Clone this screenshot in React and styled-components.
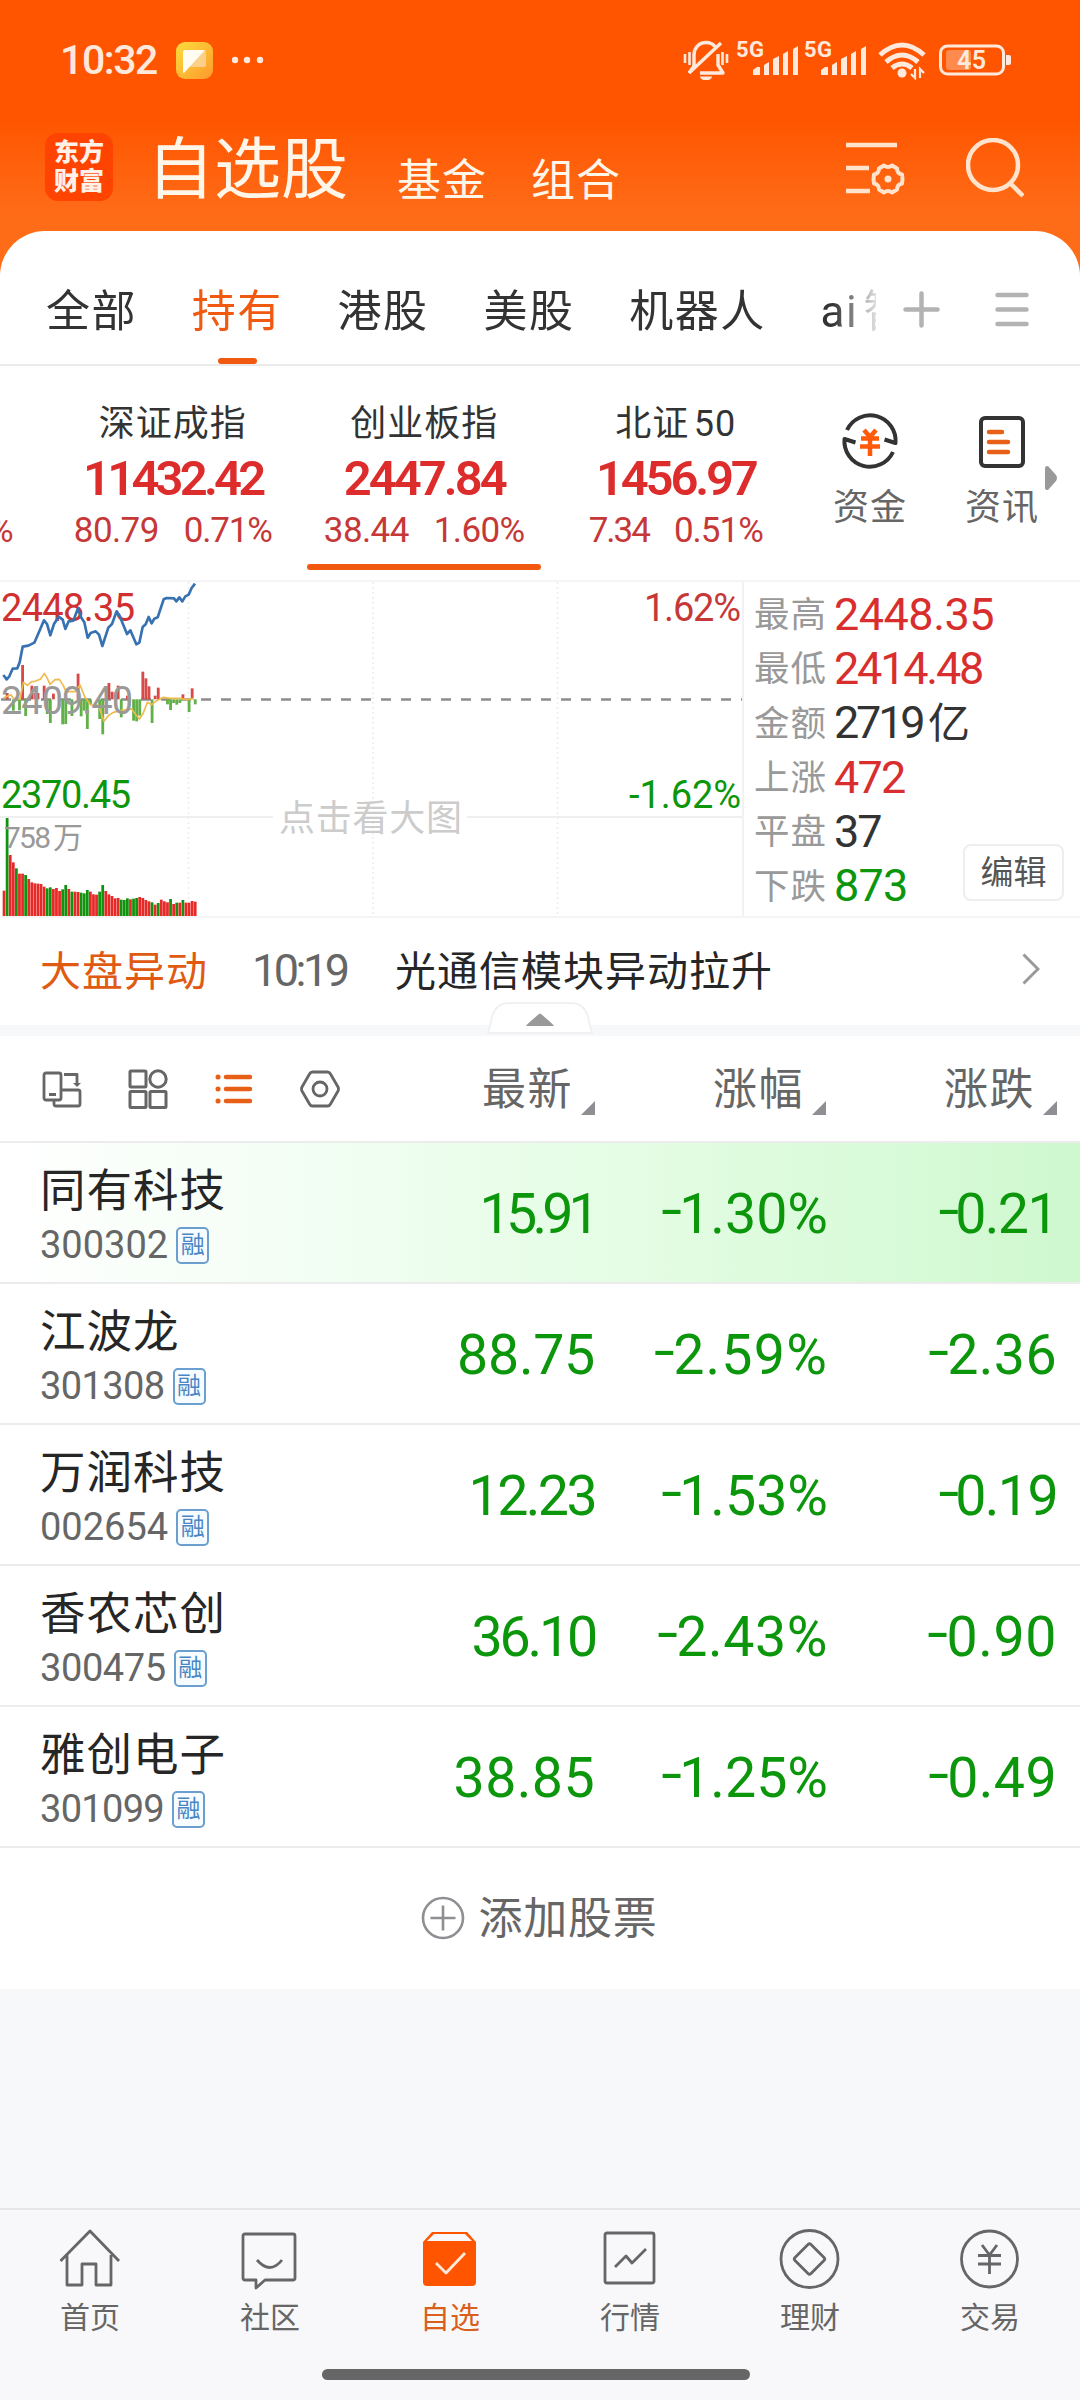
import styled, { createGlobalStyle } from "styled-components";

const GlobalStyle = createGlobalStyle`
	* {
		box-sizing: border-box;
	}
	body {
		margin: 0;
		background: #f7f8fa;
		font-family: Roboto, "Noto Sans CJK SC", sans-serif;
		text-autospace: normal;
		color: #333;
	}
	svg {
		display: block;
		flex: none;
	}
`;

const RED = "#dd2c2c";
const GREEN = "#0c960c";
const ORANGE = "#f0590f";

const Page = styled.div`
	width: 1080px;
	height: 2400px;
	display: flex;
	flex-direction: column;
	overflow: hidden;
	background: linear-gradient(#ff5500 0, #ff5500 118px, #ff6c18 215px, #ff6c18 300px, #f7f8fa 300px);
`;

// text with its own tracking, used for every figure on the page
const Num = styled.span`
	font-size: ${(p) => p.$size}px;
	letter-spacing: ${(p) => p.$track || 0}px;
	color: ${(p) => p.$color || "inherit"};
	font-weight: ${(p) => p.$weight || 400};
	line-height: 1;
	white-space: nowrap;
`;

/* ---------- status bar ---------- */

const StatusBar = styled.div`
	height: 120px;
	padding: 0 69px 0 60px;
	display: flex;
	align-items: center;
	color: #ffe9dc;
`;

const StatusLeft = styled.div`
	display: flex;
	align-items: center;
	gap: 19px;
	flex: 1;
`;

const StatusIcons = styled.div`
	display: flex;
	align-items: center;
`;

const SignalIcon = styled.svg`
	margin-right: ${(p) => p.$gap}px;
`;

const Signal = ({ gap }) => (
	<SignalIcon $gap={gap} width="64" height="56" viewBox="0 -8 64 56">
		<text x="0" y="17" fontSize="22" fontWeight="700" fill="#ffe9dc" textLength="28">
			5G
		</text>
		<g fill="#ffe9dc">
			<path d="M17 35v-5l4-3h3v8z" />
			<path d="M28 35V25l5-3v13z" />
			<path d="M37 35V19l6-3v19z" />
			<path d="M47 35V14l5-3v24z" />
			<path d="M57 35V9l5-3v29z" />
		</g>
	</SignalIcon>
);

const MuteIcon = styled.svg`
	margin-right: 7px;
`;

const WifiIcon = styled.svg`
	margin-right: 13px;
`;

const StatusRow = () => (
	<StatusBar>
		<StatusLeft>
			<Num $size={41} $track={-1.4} $weight={500}>
				10:32
			</Num>
			<svg width="37" height="37" viewBox="0 0 37 37">
				<defs>
					<linearGradient id="note" x1="0" y1="0" x2="1" y2="1">
						<stop offset="0" stopColor="#fddc3c" />
						<stop offset="1" stopColor="#fd9a2c" />
					</linearGradient>
				</defs>
				<rect width="37" height="37" rx="9" fill="url(#note)" />
				<path d="M9 8h19a2 2 0 0 1 2 2v13a2 2 0 0 1-2 2H14z" fill="#fdd08a" />
				<path d="M9 8h20L8 31a1 1 0 0 1-1-1V10a2 2 0 0 1 2-2z" fill="#fffdf2" />
			</svg>
			<svg width="34" height="8" viewBox="0 0 34 8" fill="#ffe9dc">
				<circle cx="3" cy="4" r="3.200" />
				<circle cx="15" cy="4" r="3.200" />
				<circle cx="28" cy="4" r="3.200" />
			</svg>
		</StatusLeft>
		<StatusIcons>
			<MuteIcon width="46" height="40" viewBox="0 0 46 40" fill="none" stroke="#ffe9dc" strokeWidth="3.400">
				<path d="M11 26V15c0-7 5-12.500 12-12.500 4 0 7 1.600 9 4M35 14v11l5 8H17M6 33L38 3" strokeLinejoin="round" />
				<path d="M6 33l5-7" />
				<path d="M17 36.500h12a6 4 0 0 1-12 0z" fill="#ffe9dc" stroke="none" />
				<path d="M2 14v9M6.500 12v13M39.500 12v13M44 14v9" strokeWidth="2.600" />
			</MuteIcon>
			<Signal gap={4} />
			<Signal gap={10} />
			<WifiIcon width="48" height="40" viewBox="0 0 48 40" fill="none" stroke="#ffe9dc" strokeWidth="5">
				<path d="M2 15Q24-5 46 15" />
				<path d="M8 22Q24 8 40 22" />
				<path d="M14 28Q24 20 34 28" />
				<circle cx="24" cy="33" r="4.500" fill="#ffe9dc" stroke="none" />
				<path d="M37 29v9l-4-4M42 38v-9l4 4" strokeWidth="2.200" />
			</WifiIcon>
			<svg width="72" height="32" viewBox="0 0 72 32">
				<rect x="1.500" y="2" width="63" height="28" rx="7" fill="none" stroke="#ffe9dc" strokeWidth="3" />
				<rect x="7" y="6" width="25" height="20" rx="3" fill="#ff8a4d" />
				<path d="M67 11h3a2 2 0 0 1 2 2v6a2 2 0 0 1-2 2h-3z" fill="#ffe9dc" />
				<text x="18" y="25" fontSize="25" fontWeight="600" fill="#ffe9dc" textLength="29">
					45
				</text>
			</svg>
		</StatusIcons>
	</StatusBar>
);

/* ---------- title bar ---------- */

const TitleBar = styled.header`
	height: 111px;
	padding: 0 56px 0 45px;
	display: flex;
	align-items: flex-start;
	color: #fff6ea;
`;

const Logo = styled.div`
	width: 68px;
	height: 68px;
	margin: 13px 34px 0 0;
	padding-top: 5px;
	border-radius: 13px;
	background: #ff4300;
	color: #fff0e8;
	font-size: 25px;
	font-weight: 900;
	line-height: 29px;
	text-align: center;
`;

const Title = styled.h1`
	margin: 10px 49px 0 0;
	font-size: 67px;
	line-height: 80px;
	font-weight: 400;
`;

const SubTitle = styled.span`
	margin: 33px 44px 0 0;
	font-size: 44px;
	letter-spacing: 1px;
	line-height: 56px;
`;

const TitleIcons = styled.div`
	margin: 18px 0 0 auto;
	display: flex;
	gap: 58px;
`;

const Titles = () => (
	<TitleBar>
		<Logo>
			东方
			<br />
			财富
		</Logo>
		<Title>自选股</Title>
		<SubTitle>基金</SubTitle>
		<SubTitle>组合</SubTitle>
		<TitleIcons>
			<svg width="62" height="62" viewBox="0 0 62 62" fill="none" stroke="#ffe3cc" strokeWidth="4.500">
				<path d="M0 7h51M0 30h23M0 53h24" />
				<path
					d="M38 27.500q4 3 8 0l5 3q0 5 5 6 1 4.500 0 9-5 1-5 6l-5 3q-4-3-8 0l-5-3q0-5-5-6-1-4.500 0-9 5-1 5-6z"
					strokeWidth="4"
					strokeLinejoin="round"
				/>
				<circle cx="42" cy="41" r="3.500" fill="#ffe3cc" stroke="none" />
			</svg>
			<svg width="58" height="62" viewBox="0 0 58 62" fill="none" stroke="#ffe3cc" strokeWidth="4.500">
				<circle cx="27" cy="27" r="25" />
				<path d="M44 45l13 13" />
			</svg>
		</TitleIcons>
	</TitleBar>
);

/* ---------- group tabs ---------- */

const Sheet = styled.div`
	height: 1758px;
	background: #fff;
	border-radius: 45px 45px 0 0;
	overflow: hidden;
`;

const GroupBar = styled.nav`
	height: 135px;
	padding-left: 46px;
	border-bottom: 2px solid #ebebeb;
	display: flex;
	align-items: stretch;
`;

const GroupList = styled.div`
	width: 830px;
	display: flex;
	gap: 54.8px;
	overflow: hidden;
	-webkit-mask-image: linear-gradient(90deg, #000 787px, transparent 838px);
	mask-image: linear-gradient(90deg, #000 787px, transparent 838px);
`;

const Group = styled.div`
	flex: none;
	display: flex;
	flex-direction: column;
	align-items: center;
	font-size: 44px;
	letter-spacing: 1.5px;
	line-height: 60px;
	padding-top: 51px;
	color: ${(p) => (p.$active ? ORANGE : "#333")};

	&::after {
		content: "";
		width: 39px;
		height: 6px;
		margin-top: 16px;
		border-radius: 3px;
		background: ${(p) => (p.$active ? ORANGE : "transparent")};
	}
`;

const GroupTools = styled.div`
	display: flex;
	align-items: center;
	gap: 55px;
	padding: 23px 0 0 27px;
`;

const groups = ["全部", "持有", "港股", "美股", "机器人", "ai智能"];

const Groups = () => (
	<GroupBar>
		<GroupList>
			{groups.map((g) => (
				<Group key={g} $active={g === "持有"}>
					{g}
				</Group>
			))}
		</GroupList>
		<GroupTools>
			<svg width="37" height="37" viewBox="0 0 37 37" stroke="#b3b3b3" strokeWidth="4.500" strokeLinecap="round">
				<path d="M18.500 2.500v32M2.500 18.500h32" />
			</svg>
			<svg width="34" height="37" viewBox="0 0 34 37" stroke="#b3b3b3" strokeWidth="4.500" strokeLinecap="round">
				<path d="M2.500 4h29M2.500 18.500h29M2.500 33h29" />
			</svg>
		</GroupTools>
	</GroupBar>
);

/* ---------- index strip ---------- */

const IndexStrip = styled.section`
	height: 214px;
	display: flex;
`;

const IndexCell = styled.div`
	width: ${(p) => (p.$cut ? 47 : 251.5)}px;
	flex: none;
	padding-top: 32px;
	display: flex;
	flex-direction: column;
	align-items: center;
	color: #333;

	&::after {
		content: "";
		width: 234px;
		height: 6px;
		margin-top: 12px;
		border-radius: 3px;
		background: ${(p) => (p.$active ? ORANGE : "transparent")};
	}
`;

const IndexName = styled.div`
	font-size: 36px;
	letter-spacing: 1px;
	line-height: 52px;
	height: 51px;
`;

const IndexPrice = styled.div`
	height: 58px;
	display: flex;
	align-items: center;
`;

const IndexChange = styled.div`
	height: 44px;
	display: flex;
	align-items: center;
	gap: 25px;
	margin-top: 1px;
	align-self: ${(p) => (p.$cut ? "flex-start" : "center")};
	margin-left: ${(p) => (p.$cut ? -12 : 0)}px;
`;

const Shortcuts = styled.div`
	flex: 1;
	display: flex;
	padding: 44px 0 0 32px;
	gap: 59px;
`;

const Shortcut = styled.div`
	display: flex;
	flex-direction: column;
	align-items: center;
	gap: 11px;
	width: 73px;
	font-size: 36px;
	letter-spacing: 1px;
	line-height: 50px;
	color: #666;
	white-space: nowrap;
`;

const MoreArrow = styled.div`
	margin: 56px 0 0 -53px;
`;

const indexes = [
	{ name: "深证成指", price: "11432.42", pt: -3.8, diff: "80.79", dt: -0.6, rate: "0.71%", rt: -1.2 },
	{ name: "创业板指", price: "2447.84", pt: -3, diff: "38.44", dt: -0.6, rate: "1.60%", rt: -0.6, active: true },
	{ name: "北证50", price: "1456.97", pt: -3.2, diff: "7.34", dt: -2, rate: "0.51%", rt: -1 },
];

const Indexes = () => (
	<IndexStrip>
		<IndexCell $cut>
			<IndexName />
			<IndexPrice />
			<IndexChange $cut>
				<Num $size={35} $color="#c63838">
					%
				</Num>
			</IndexChange>
		</IndexCell>
		{indexes.map((x) => (
			<IndexCell key={x.name} $active={x.active}>
				<IndexName>{x.name}</IndexName>
				<IndexPrice>
					<Num $size={49} $weight={600} $track={x.pt} $color={RED}>
						{x.price}
					</Num>
				</IndexPrice>
				<IndexChange>
					<Num $size={35} $track={x.dt} $color="#c63838">
						{x.diff}
					</Num>
					<Num $size={35} $track={x.rt} $color="#c63838">
						{x.rate}
					</Num>
				</IndexChange>
			</IndexCell>
		))}
		<Shortcuts>
			<Shortcut>
				<svg width="60" height="62" viewBox="0 0 60 62" fill="none" stroke="#333" strokeWidth="4" strokeLinejoin="round">
					<path d="M7 20A25.500 25.500 0 0 1 55.500 33l-11-3.500M53 42A25.500 25.500 0 0 1 4.500 29l11 3.500" />
					<path d="M24 20l6 7 6-7M21 28.500h18M20 36.500h20M30 27v19" stroke="#ff5a0a" strokeWidth="4.500" />
				</svg>
				资金
			</Shortcut>
			<Shortcut>
				<svg width="46" height="62" viewBox="0 0 46 62" fill="none" stroke="#333" strokeWidth="4">
					<rect x="2" y="8" width="42" height="48" rx="4" />
					<path d="M10 22h13M10 32h19M10 42h19" stroke="#e85f18" strokeWidth="4.500" strokeLinecap="round" />
				</svg>
				资讯
			</Shortcut>
			<MoreArrow>
				<svg width="13" height="24" viewBox="0 0 13 24">
					<path d="M0 2q0-2 3-2l8 9q2 3 0 6l-8 9q-3 0-3-2z" fill="#999" />
				</svg>
			</MoreArrow>
		</Shortcuts>
	</IndexStrip>
);

/* ---------- minute chart ---------- */

const ChartRow = styled.section`
	height: 338px;
	display: flex;
	border-top: 2px solid #f4f4f4;
	border-bottom: 2px solid #f4f4f4;
`;

// all series below are in thirds of a pixel
const STEP = 9.25;
const price =
	"10,318 20,331 28,322 38,299 52,298 59,280 68,233 85,230 103,221 118,187 132,154 141,165 151,199 162,165 176,143 188,152 196,180 206,157 220,155 234,118 243,145 253,160 263,206 272,192 287,187 297,197 307,231 325,176 336,165 350,127 359,141 381,195 391,184 409,226 418,221 428,174 437,166 446,144 455,163 463,149 473,145 491,91 500,87 522,88 529,97 538,85 547,97 556,82 566,77 575,57 585,44";
const average =
	"10,387 25,380 33,378 40,388 60,390 70,340 82,349 95,338 105,337 122,330 133,313 142,328 150,346 165,332 178,331 190,350 198,368 225,368 240,348 255,385 272,408 295,408 312,457 325,440 340,430 360,425 395,420 410,440 418,450 430,432 442,400 455,407 470,395 490,385 510,388 540,388 560,392 582,388";

// [slot, y of the free end], the zero line is at 391
const flow = [
	[1, 372], [3, 425], [4, 396], [5, 424], [6, 288], [7, 441], [9, 350], [10, 372], [11, 372], [13, 350],
	[14, 435], [15, 462], [16, 374], [19, 466], [20, 465], [22, 441], [24, 314], [25, 442], [26, 425],
	[27, 480], [28, 405], [31, 450], [32, 496], [34, 342], [35, 368], [36, 371], [37, 350], [38, 445],
	[40, 380], [42, 455], [43, 457], [44, 440], [45, 308], [46, 328], [47, 352], [48, 462], [49, 380],
	[50, 356], [53, 406], [54, 423], [55, 402], [56, 407], [57, 402], [58, 376], [60, 429], [61, 358], [62, 406],
];

const volume = [
	965, 747, 858, 880, 898, 914, 914, 918, 930, 940, 943, 944, 945, 953, 958, 955, 960, 957, 966, 961, 948, 960,
	968, 968, 969, 971, 973, 963, 968, 976, 977, 968, 948, 966, 976, 981, 988, 987, 992, 993, 988, 991, 989, 987,
	984, 987, 993, 997, 1000, 1007, 1002, 992, 997, 1000, 990, 1005, 1001, 1001, 993, 1001, 1001, 996, 998,
];
const fallSlots = [1, 4, 7, 14, 15, 19, 20, 22, 25, 26, 27, 31, 32, 38, 39, 40, 42, 43, 48, 50, 54, 56, 58];

const MinuteChart = () => (
	<svg width="742" height="334" viewBox="0 2 742 334">
		<g stroke="#ececec" strokeWidth="1.500" strokeDasharray="2 3">
			<path d="M188.500 2v334M373 2v334M557.500 2v334" />
		</g>
		<path d="M0 237h273M467 237h275" stroke="#efefef" strokeWidth="2" />
		<path d="M1 119.500h741" stroke="#8c8c8c" strokeWidth="2.500" strokeDasharray="10 10" />
		<g fontSize="38">
			<text x="1" y="41" fill="#d0302f" textLength="134">2448.35</text>
			<text x="741" y="41" fill="#c63838" textAnchor="end" textLength="97">1.62%</text>
			<text x="1" y="228" fill={GREEN} textLength="130">2370.45</text>
			<text x="741" y="228" fill={GREEN} textAnchor="end" textLength="112">-1.62%</text>
		</g>
		<text x="279" y="251" fontSize="36" fill="#ccc" textLength="183">点击看大图</text>
		<g transform="translate(0 -11) scale(0.33333)">
			{flow.map(([slot, y]) => (
				<rect
					key={slot}
					x={8 + slot * STEP}
					y={Math.min(y, 391)}
					width="8.500"
					height={Math.abs(y - 391)}
					fill={y < 391 ? "#d84a4a" : "#62b04a"}
				/>
			))}
			<polyline points={average} fill="none" stroke="#efba4c" strokeWidth="5" strokeLinejoin="round" />
			<polyline points={price} fill="none" stroke="#3672b2" strokeWidth="8" strokeLinejoin="round" />
			{volume.map((y, i) => (
				<rect
					key={i}
					x={8 + i * STEP}
					y={y}
					width="8.300"
					height={1041 - y}
					fill={fallSlots.includes(i) ? "#12930f" : "#e62a28"}
				/>
			))}
		</g>
		<text x="1" y="134" fontSize="38" fill="#999" textLength="132">2409.40</text>
		<text x="4" y="268" fontSize="30" fill="#999" textLength="79">758万</text>
	</svg>
);

const Stats = styled.div`
	flex: 1;
	min-width: 0;
	display: flex;
	border-left: 2px solid #f2f2f2;
	padding: 5px 16px 0 10px;
`;

const StatList = styled.div`
	flex: 1;
	min-width: 0;
`;

const Stat = styled.div`
	height: 54.3px;
	display: flex;
	align-items: center;
	white-space: nowrap;
`;

const StatLabel = styled.span`
	width: 80px;
	flex: none;
	padding-bottom: 5px;
	font-size: 35.5px;
	letter-spacing: 1px;
	color: #999;
`;

const Unit = styled.span`
	font-size: 42px;
`;

const EditButton = styled.button`
	flex: none;
	align-self: flex-end;
	width: 101px;
	height: 57px;
	margin: 0 0 15px -50px;
	padding: 0;
	border: 2px solid #eee;
	border-radius: 8px;
	background: #fff;
	color: #555;
	font: inherit;
	font-size: 33px;
	line-height: 50px;
`;

const stats = [
	{ label: "最高", value: "2448.35", color: "#d82e2e", track: -0.5 },
	{ label: "最低", value: "2414.48", color: "#d82e2e", track: -2.2 },
	{ label: "金额", value: "2719", unit: "亿", color: "#333", track: -3.2 },
	{ label: "上涨", value: "472", color: "#d82e2e", track: -1.8 },
	{ label: "平盘", value: "37", color: "#333", track: -2 },
	{ label: "下跌", value: "873", color: GREEN, track: -0.8 },
];

const Overview = () => (
	<ChartRow>
		<MinuteChart />
		<Stats>
			<StatList>
				{stats.map((s) => (
					<Stat key={s.label}>
						<StatLabel>{s.label}</StatLabel>
						<Num $size={45} $color={s.color} $track={s.track}>
							{s.value}
							{s.unit && <Unit>{s.unit}</Unit>}
						</Num>
					</Stat>
				))}
			</StatList>
			<EditButton>编辑</EditButton>
		</Stats>
	</ChartRow>
);

/* ---------- market news ---------- */

const News = styled.section`
	position: relative;
	height: 118px;
	padding: 0 40px 7px 40px;
	border-bottom: 11px solid #f7f8fa;
	display: flex;
	align-items: center;
	font-size: 41px;
	letter-spacing: 1px;
	white-space: nowrap;
`;

const NewsTag = styled.span`
	width: 212px;
	color: #e05a12;
`;

const NewsTime = styled.span`
	width: 143px;
	padding-top: 5px;
	display: flex;
	color: #666;
`;

const NewsText = styled.span`
	flex: 1;
	color: #262626;
`;

const Handle = styled.div`
	position: absolute;
	left: 487px;
	bottom: -9px;
`;

const NewsBar = () => (
	<News>
		<NewsTag>大盘异动</NewsTag>
		<NewsTime>
			<Num $size={45} $track={-3.5}>
				10:19
			</Num>
		</NewsTime>
		<NewsText>光通信模块异动拉升</NewsText>
		<svg width="18" height="34" viewBox="0 -2 18 34" fill="none" stroke="#999" strokeWidth="3">
			<path d="M1.500 1.500L16 16 1.500 30.500" />
		</svg>
		<Handle>
			<svg width="106" height="32" viewBox="0 0 106 32">
				<path d="M1 31l4-16Q9 1 22 1h62q13 0 17 14l4 16z" fill="#fff" stroke="#f1f1f3" strokeWidth="2" />
				<path d="M39 24q0-1 13-12 1-1 2 0 13 11 13 12z" fill="#999" />
			</svg>
		</Handle>
	</News>
);

/* ---------- stock table ---------- */

const TableHead = styled.div`
	height: 107px;
	padding: 0 23px 0 40px;
	border-bottom: 2px solid #ececec;
	display: flex;
	align-items: center;
	color: #666;
`;

const ViewIcons = styled.div`
	display: flex;
	align-items: center;
	gap: 46px;
	flex: 1;
`;

const HeadCell = styled.div`
	width: ${(p) => p.$width}px;
	display: flex;
	justify-content: flex-end;
	align-items: center;
	gap: 8px;
	font-size: 44px;
	letter-spacing: 1.5px;
	line-height: 60px;
	padding-top: 2px;
	white-space: nowrap;

	&::after {
		content: "";
		margin-top: 36px;
		border-bottom: 14px solid #8e8e93;
		border-left: 14px solid transparent;
	}
`;

const StockRow = styled.div`
	height: 141px;
	padding: 0 23px 0 40px;
	border-bottom: 2px solid #ececec;
	display: flex;
	align-items: center;
	background: ${(p) => (p.$flash ? "linear-gradient(90deg, #fff 0, #f4fef5 25%, #e8fde8 50%, #dcfbdc 75%, #cff8cf 100%)" : "#fff")};
`;

const Stock = styled.div`
	flex: 1;
	padding-top: 5px;
`;

const StockName = styled.div`
	font-size: 45.5px;
	letter-spacing: 1px;
	line-height: 60px;
	color: #262626;
`;

const StockCode = styled.div`
	height: 46px;
	display: flex;
	align-items: center;
	gap: 8px;
	color: #666;
`;

const Badge = styled.span`
	width: 33px;
	height: 37px;
	border: 2px solid #6a9fd0;
	border-radius: 5px;
	background: #f6fcff;
	font-size: 24px;
	line-height: 33px;
	text-align: center;
	color: #4a86c4;
`;

const Cell = styled.div`
	width: ${(p) => p.$width}px;
	padding-top: 4px;
	display: flex;
	justify-content: flex-end;
	color: ${GREEN};
`;

// the sign sits at mid-height of the figures
const Minus = styled.span`
	display: inline-block;
	transform: translateY(-4px) scaleX(1.35);
`;

const Signed = ({ value, track }) => (
	<Num $size={55.5} $track={track}>
		<Minus>-</Minus>
		{value}
	</Num>
);

const stocks = [
	{ name: "同有科技", code: "300302", last: "15.91", lt: -4.8, rate: "1.30%", rt: 0, diff: "0.21", dt: -1.6, flash: true },
	{ name: "江波龙", code: "301308", ct: -0.6, last: "88.75", lt: -0.3, rate: "2.59%", rt: 1.2, diff: "2.36", dt: 0.4 },
	{ name: "万润科技", code: "002654", last: "12.23", lt: -2.6, rate: "1.53%", rt: 0, diff: "0.19", dt: -1.6 },
	{ name: "香农芯创", code: "300475", ct: -0.4, last: "36.10", lt: -3.2, rate: "2.43%", rt: 0.6, diff: "0.90", dt: 0.6 },
	{ name: "雅创电子", code: "301099", ct: -0.7, last: "38.85", lt: 0.4, rate: "1.25%", rt: 0, diff: "0.49", dt: 0.4 },
];

const AddRow = styled.div`
	height: 141px;
	padding: 0 2px 2px 0;
	display: flex;
	align-items: center;
	justify-content: center;
	gap: 14px;
	font-size: 44px;
	letter-spacing: 0.7px;
	color: #666;
`;

const AddText = styled.span`
	padding-bottom: 6px;
`;

const StockTable = () => (
	<section>
		<TableHead>
			<ViewIcons>
				<svg width="42" height="40" viewBox="0 0 42 40" fill="none" stroke="#666" strokeWidth="2.800" strokeLinejoin="round">
					<rect x="4" y="4" width="17" height="27" rx="2" />
					<path d="M9 25.500h7M24 5.500h13v10M21 21h17q2 0 2 2v12q0 2-2 2H16q-2 0-2-2v-4" />
					<path d="M33 14h8l-4 4z" fill="#666" stroke="none" />
				</svg>
				<svg width="40" height="40" viewBox="0 0 40 40" fill="none" stroke="#666" strokeWidth="3">
					<rect x="2" y="2" width="16" height="16" rx="1" />
					<circle cx="30" cy="10" r="8.200" />
					<rect x="2" y="22.500" width="16" height="16" rx="1" />
					<rect x="22" y="22.500" width="16" height="16" rx="1" />
				</svg>
				<svg width="40" height="40" viewBox="0 0 40 40" fill="none" stroke="#e85f18" strokeWidth="4.500" strokeLinecap="round">
					<path d="M4 8h.1M4 20h.1M4 32h.1" strokeWidth="5" />
					<path d="M12 8h24M12 20h24M12 32h24" />
				</svg>
				<svg width="40" height="40" viewBox="0 0 40 40" fill="none" stroke="#666" strokeWidth="2.800" strokeLinejoin="round">
					<path d="M12.500 3h15q2 0 3 2l7.500 13q1 2 0 4l-7.500 13q-1 2-3 2h-15q-2 0-3-2L2 22q-1-2 0-4L9.500 5q1-2 3-2z" />
					<circle cx="20" cy="20" r="7" />
				</svg>
			</ViewIcons>
			<HeadCell $width={200}>最新</HeadCell>
			<HeadCell $width={231}>涨幅</HeadCell>
			<HeadCell $width={231}>涨跌</HeadCell>
		</TableHead>
		{stocks.map((s) => (
			<StockRow key={s.code} $flash={s.flash}>
				<Stock>
					<StockName>{s.name}</StockName>
					<StockCode>
						<Num $size={38} $track={s.ct}>
							{s.code}
						</Num>
						<Badge>融</Badge>
					</StockCode>
				</Stock>
				<Cell $width={200}>
					<Num $size={55.5} $track={s.lt}>
						{s.last}
					</Num>
				</Cell>
				<Cell $width={233}>
					<Signed value={s.rate} track={s.rt} />
				</Cell>
				<Cell $width={229}>
					<Signed value={s.diff} track={s.dt} />
				</Cell>
			</StockRow>
		))}
		<AddRow>
			<svg width="44" height="44" viewBox="0 0 44 44" fill="none" stroke="#8e8e93" strokeWidth="2.600">
				<circle cx="22" cy="22" r="20" />
				<path d="M22 9.500v25M9.500 22h25" />
			</svg>
			<AddText>添加股票</AddText>
		</AddRow>
	</section>
);

/* ---------- bottom navigation ---------- */

const TabBar = styled.nav`
	margin-top: auto;
	height: 192px;
	border-top: 2px solid #e6e6e8;
	background: #f8f8fa;
	display: flex;
	flex-direction: column;
	align-items: center;
`;

const Tabs = styled.div`
	align-self: stretch;
	height: 159px;
	display: flex;
`;

const Tab = styled.div`
	flex: 1;
	padding-top: 18px;
	display: flex;
	flex-direction: column;
	align-items: center;
	gap: 8px;
	font-size: 30px;
	line-height: 40px;
	color: ${(p) => (p.$active ? "#d9601c" : "#666")};
`;

const HomeBar = styled.div`
	width: 428px;
	height: 11px;
	margin-right: 8px;
	border-radius: 6px;
	background: #666;
`;

const tabs = [
	{
		name: "首页",
		icon: <path d="M1.500 33L31 3l29 30M8 27v30h15V36h14v21h15V27" />,
	},
	{
		name: "社区",
		icon: (
			<path d="M6 6h48q2 0 2 2v42q0 2-2 2H26l-9 8v-8H6q-2 0-2-2V8q0-2 2-2zM18 32q13 15 25 0" />
		),
	},
	{
		name: "自选",
		active: true,
		icon: (
			<>
				<path d="M4 14l9-10h35l9 10v40q0 4-4 4H8q-4 0-4-4z" fill="#ff5500" stroke="none" />
				<path d="M8 13l7-7h31l7 7z" fill="#f8f8fa" stroke="none" />
				<path d="M17 35l10 10 19-20" stroke="#ffeadb" />
			</>
		),
	},
	{
		name: "行情",
		icon: <path d="M8 5h45q2 0 2 2v46q0 2-2 2H8q-2 0-2-2V7q0-2 2-2zM16 39l11-11 6 7 14-14" />,
	},
	{
		name: "理财",
		icon: (
			<>
				<circle cx="30.500" cy="31" r="28.500" />
				<path d="M29 16.500q1.500-1.500 3 0l13 13q1.500 1.500 0 3l-13 13q-1.500 1.500-3 0l-13-13q-1.500-1.500 0-3z" />
			</>
		),
	},
	{
		name: "交易",
		icon: (
			<>
				<circle cx="30.500" cy="31" r="28" />
				<path d="M23 17l7.500 10L38 17M19 27.500h23M19 36h23M30.500 27v19" />
			</>
		),
	},
];

const BottomNav = () => (
	<TabBar>
		<Tabs>
			{tabs.map((t) => (
				<Tab key={t.name} $active={t.active}>
					<svg width="62" height="62" viewBox="0 0 62 62" fill="none" stroke="#666" strokeWidth="2.800" strokeLinejoin="round">
						{t.icon}
					</svg>
					{t.name}
				</Tab>
			))}
		</Tabs>
		<HomeBar />
	</TabBar>
);

function App() {
	return (
		<Page>
			<GlobalStyle />
			<StatusRow />
			<Titles />
			<Sheet>
				<Groups />
				<Indexes />
				<Overview />
				<NewsBar />
				<StockTable />
			</Sheet>
			<BottomNav />
		</Page>
	);
}

export default App;
